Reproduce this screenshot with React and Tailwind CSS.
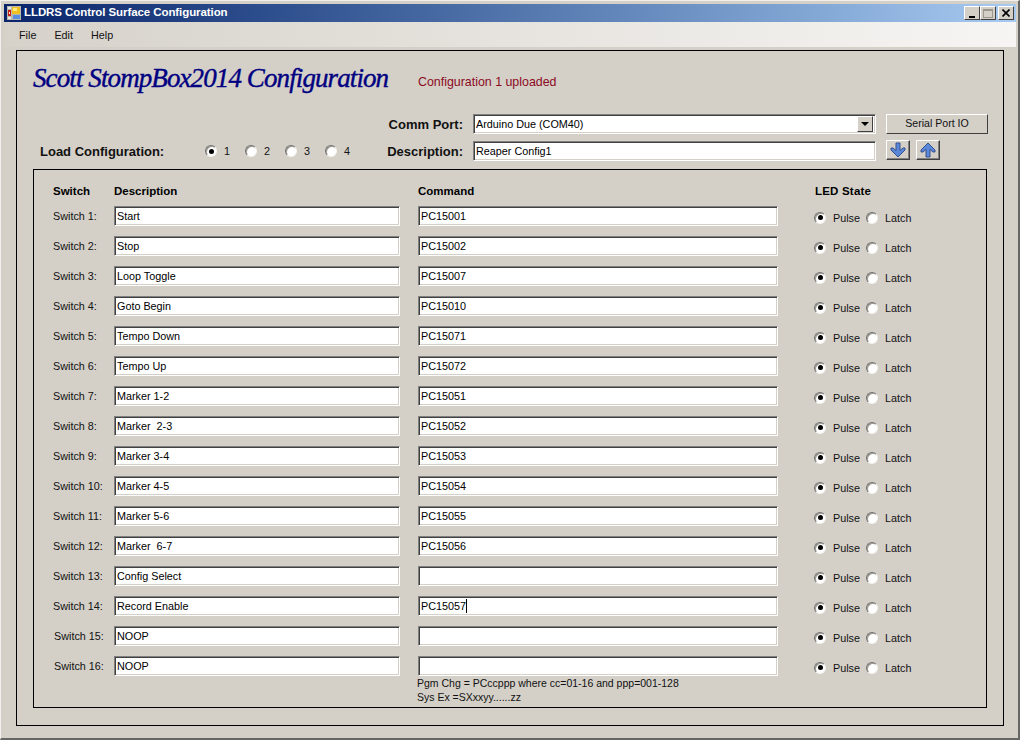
import React from "react";

const rows = [
  { name: "Switch 1:", desc: "Start", cmd: "PC15001" },
  { name: "Switch 2:", desc: "Stop", cmd: "PC15002" },
  { name: "Switch 3:", desc: "Loop Toggle", cmd: "PC15007" },
  { name: "Switch 4:", desc: "Goto Begin", cmd: "PC15010" },
  { name: "Switch 5:", desc: "Tempo Down", cmd: "PC15071" },
  { name: "Switch 6:", desc: "Tempo Up", cmd: "PC15072" },
  { name: "Switch 7:", desc: "Marker 1-2", cmd: "PC15051" },
  { name: "Switch 8:", desc: "Marker  2-3", cmd: "PC15052" },
  { name: "Switch 9:", desc: "Marker 3-4", cmd: "PC15053" },
  { name: "Switch 10:", desc: "Marker 4-5", cmd: "PC15054" },
  { name: "Switch 11:", desc: "Marker 5-6", cmd: "PC15055" },
  { name: "Switch 12:", desc: "Marker  6-7", cmd: "PC15056" },
  { name: "Switch 13:", desc: "Config Select", cmd: "" },
  { name: "Switch 14:", desc: "Record Enable", cmd: "PC15057", caret: true },
  { name: "Switch 15:", desc: "NOOP", cmd: "", shift: true },
  { name: "Switch 16:", desc: "NOOP", cmd: "", shift: true },
];

const TextBox = ({ value, caret, className }) => (
  <div
    className={`h-[20px] flex items-center pl-[2px] bg-white whitespace-pre text-black border border-t-[#808080] border-l-[#808080] border-r-white border-b-white shadow-[inset_1px_1px_0_#404040,inset_-1px_-1px_0_#d4d0c8] ${className}`}
  >
    {value}
    {caret && <span className="inline-block w-px h-[14px] bg-black" />}
  </div>
);

const Radio = ({ checked }) => (
  <span className="w-[12px] h-[12px] shrink-0 flex items-center justify-center rounded-full bg-white border border-t-[#707070] border-l-[#707070] border-r-[#f4f2ee] border-b-[#f4f2ee] shadow-[inset_1px_1px_0_#9a978f]">
    {checked && <span className="w-[5px] h-[5px] rounded-full bg-black" />}
  </span>
);

const ArrowButton = ({ up }) => (
  <button className="w-[24px] h-[20px] flex items-center justify-center bg-[#d4d0c8] border border-t-white border-l-white border-r-[#404040] border-b-[#404040] shadow-[inset_-1px_-1px_0_#808080]">
    <svg width="16" height="16" viewBox="0 0 16 16" className={up ? "" : "rotate-180"}>
      <path
        d="M8 1 L15 8 L15 10 L13 10 L10 7.5 L10 15 L6 15 L6 7.5 L3 10 L1 10 L1 8 Z"
        fill="#5b87d8"
        stroke="#34508f"
        strokeWidth="1"
      />
    </svg>
  </button>
);

const CaptionButton = ({ children, className }) => (
  <div
    className={`w-[16px] h-[14px] flex items-center justify-center bg-[#d4d0c8] border border-t-white border-l-white border-r-[#404040] border-b-[#404040] ${className}`}
  >
    {children}
  </div>
);

export default function App() {
  return (
    <div
      className="w-[1020px] h-[740px] overflow-hidden flex flex-col pt-[3px] pl-[3px] pr-[2px] bg-[#d4d0c8] border-t border-l border-t-[#f2f0ec] border-l-[#f2f0ec] border-r-2 border-b-2 border-r-[#666666] border-b-[#666666] text-[10.8px] text-[#111]"
      style={{ fontFamily: '"Liberation Sans", Arial, sans-serif' }}
    >
      {/* title bar */}
      <div className="h-[18px] shrink-0 flex items-center bg-gradient-to-r from-[#0a246a] to-[#a6caf0]">
        <svg width="14" height="14" viewBox="0 0 14 14" className="ml-[3px]">
          <rect x="0" y="0" width="14" height="14" fill="#b8b8b0" />
          <rect x="1" y="1" width="3" height="2" fill="#e8e8e0" />
          <rect x="5" y="1" width="8" height="7" fill="#f0c020" />
          <rect x="6" y="2" width="4" height="3" fill="#ffe880" />
          <rect x="1" y="4" width="3" height="6" fill="#c82018" />
          <rect x="2" y="6" width="1" height="2" fill="#f8f0e0" />
          <rect x="6" y="9" width="7" height="4" fill="#5890e0" />
          <rect x="1" y="11" width="3" height="2" fill="#e8e8e0" />
        </svg>
        <span className="ml-[3px] text-white font-bold text-[11.5px] tracking-[-0.08px]">
          LLDRS Control Surface Configuration
        </span>
        <div className="ml-auto mr-[2px] flex items-center">
          <CaptionButton>
            <span className="w-[6px] h-[2px] bg-black mt-[7px] -ml-[1px]" />
          </CaptionButton>
          <CaptionButton>
            <span className="w-[10px] h-[9px] border border-t-2 border-[#9a978f]" />
          </CaptionButton>
          <CaptionButton className="ml-[2px]">
            <svg width="8" height="8" viewBox="0 0 8 8">
              <path d="M0.5 0.5 L7.5 7.5 M7.5 0.5 L0.5 7.5" stroke="#000" strokeWidth="1.6" />
            </svg>
          </CaptionButton>
        </div>
      </div>

      {/* menu bar */}
      <div className="h-[25px] shrink-0 flex items-center pl-[15px] gap-[18px] bg-gradient-to-r from-[#d6d2ca] to-[#f6f5f3] pt-[1px]">
        <span>File</span>
        <span>Edit</span>
        <span>Help</span>
      </div>

      {/* outer group */}
      <div className="ml-[12px] mr-[12px] mt-[3px] h-[676px] shrink-0 border border-black">
        <div className="h-[63px] flex items-center pl-[16px] pb-[8px]">
          <span
            className="w-[385px] text-[#000080] italic text-[27px] tracking-[-0.9px] whitespace-nowrap [-webkit-text-stroke:0.4px_#000080]"
            style={{ fontFamily: '"Liberation Serif", serif' }}
          >
            Scott StompBox2014 Configuration
          </span>
          <span className="text-[#8c0a1e] text-[12.4px] mt-[8px]">Configuration 1 uploaded</span>
        </div>

        <div className="h-[20px] flex items-center">
          <span className="w-[446px] text-right font-bold text-[13px] pt-[1px]">Comm Port:</span>
          <div className="ml-[10px] w-[403px] h-[20px] flex items-center justify-between pl-[2px] pr-[2px] bg-white text-black border border-t-[#808080] border-l-[#808080] border-r-white border-b-white shadow-[inset_1px_1px_0_#404040,inset_-1px_-1px_0_#d4d0c8]">
            Arduino Due (COM40)
            <span className="w-[16px] h-[16px] flex items-center justify-center bg-[#d4d0c8] border border-t-white border-l-white border-r-[#404040] border-b-[#404040]">
              <span className="w-0 h-0 border-x-[4px] border-x-transparent border-t-[4px] border-t-black" />
            </span>
          </div>
          <button className="ml-[10px] w-[102px] h-[20px] bg-[#d4d0c8] border border-t-white border-l-white border-r-[#404040] border-b-[#404040] text-[10.6px]">
            Serial Port IO
          </button>
        </div>

        <div className="mt-[6px] h-[20px] flex items-center">
          <span className="ml-[23px] w-[165px] font-bold text-[13px] pt-[3px]">Load Configuration:</span>
          {["1", "2", "3", "4"].map((n) => (
            <div key={n} className="w-[40px] flex items-center gap-[7px] mt-[2px]">
              <Radio checked={n === "1"} />
              <span>{n}</span>
            </div>
          ))}
          <span className="w-[98px] text-right font-bold text-[13px] pt-[3px]">Description:</span>
          <TextBox value="Reaper Config1" className="ml-[10px] w-[403px] mt-[2px]" />
          <div className="ml-[10px] flex gap-[6px]">
            <ArrowButton />
            <ArrowButton up />
          </div>
        </div>

        {/* switch table */}
        <div className="ml-[16px] mt-[9px] w-[954px] h-[539px] border border-black pt-[13px]">
          <div className="h-[23px] flex font-bold text-[11.5px] text-black">
            <span className="ml-[19px] w-[61px]">Switch</span>
            <span className="w-[304px]">Description</span>
            <span className="w-[397px]">Command</span>
            <span className="tracking-[0.2px]">LED State</span>
          </div>
          {rows.map((row) => (
            <div key={row.name} className="h-[30px] flex items-start">
              <span className={`w-[61px] mt-[2px] ${row.shift ? "ml-[20px] -mr-[1px]" : "ml-[19px]"}`}>
                {row.name}
              </span>
              <TextBox value={row.desc} className="w-[286px]" />
              <TextBox value={row.cmd} caret={row.caret} className="ml-[18px] w-[360px]" />
              <div className="ml-[36px] mt-[3px] flex items-center">
                <Radio checked />
                <span className="ml-[7px] w-[33px] pt-[1px]">Pulse</span>
                <Radio />
                <span className="ml-[7px] pt-[1px]">Latch</span>
              </div>
            </div>
          ))}
          <div className="-mt-[10px] ml-[383px] text-[10.5px] leading-[14px] text-[#111]">
            <p>Pgm Chg = PCccppp where cc=01-16 and ppp=001-128</p>
            <p>Sys Ex =SXxxyy......zz</p>
          </div>
        </div>
      </div>
    </div>
  );
}
